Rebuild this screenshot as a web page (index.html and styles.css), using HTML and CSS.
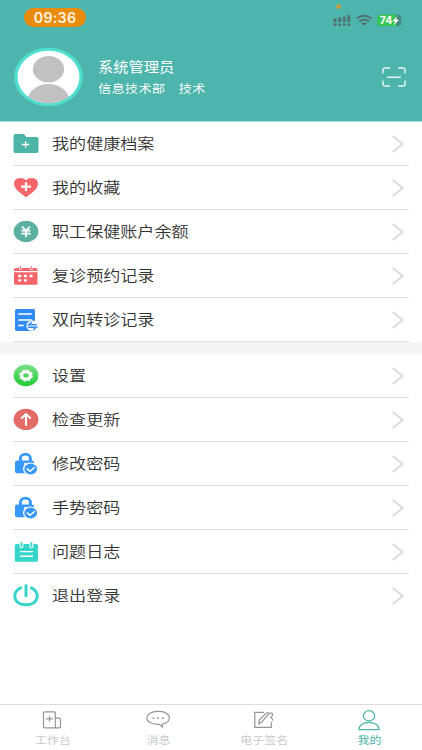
FILE: index.html
```html
<!DOCTYPE html>
<html lang="zh-CN">
<head>
<meta charset="utf-8">
<title>我的</title>
<link rel="stylesheet" href="styles.css">
</head>
<body>
<svg class="defs" width="0" height="0" aria-hidden="true">
  <defs>
    <linearGradient id="green" x1="0" y1="0" x2="0" y2="1"><stop offset="0" stop-color="#7be08a"/><stop offset="1" stop-color="#21cb35"/></linearGradient>
    <symbol id="chevron" viewBox="0 0 12 18"><path d="M.8 1 10.6 9 .8 17" fill="none" stroke="#dadada" stroke-width="1.9"/></symbol>
    <symbol id="lock" viewBox="0 0 26 25">
      <path d="M7.400 11V7.400a5 4.300 0 0 1 10 0V11" fill="none" stroke="#3797fb" stroke-width="2.900"/>
      <rect x="2" y="9.500" width="19" height="12.800" rx="2" fill="#3797fb"/>
      <circle cx="12.400" cy="13" r="1.300" fill="#fff"/>
      <ellipse cx="17.300" cy="17.800" rx="7.400" ry="6.300" fill="#fff"/>
      <ellipse cx="17.700" cy="18" rx="6.400" ry="5.400" fill="#3797fb"/>
      <path d="m13.800 17.700 3.200 2.500 4.700-4" fill="none" stroke="#fff" stroke-width="1.500"/>
    </symbol>
  </defs>
</svg>
<div class="app">
  <header class="header">
    <div class="status">
      <span class="clock">09:36</span>
      <svg class="signals" width="80" height="30" viewBox="0 0 80 30">
        <circle cx="9.6" cy="6.6" r="2.4" fill="#c79a43"/>
        <g fill="#52706d"><rect x="4.6" y="18.6" width="2.9" height="3.5" rx=".7"/><rect x="9.2" y="17.6" width="2.9" height="4.5" rx=".7"/><rect x="13.8" y="16.4" width="2.9" height="5.7" rx=".7"/><rect x="18.4" y="15" width="2.9" height="7.1" rx=".7"/><rect x="4.6" y="23.2" width="2.9" height="2.7" rx=".7"/><rect x="9.2" y="23.2" width="2.9" height="2.7" rx=".7"/><rect x="13.8" y="23.2" width="2.9" height="2.7" rx=".7"/><rect x="18.4" y="23.2" width="2.9" height="2.7" rx=".7"/></g>
        <g fill="none" stroke="#52706d" stroke-width="2.100"><path d="M28 18.300q7.300-5 14.600 0M30.500 21.300q4.800-3.200 9.600 0"/></g>
        <path d="M32.400 23.400q2.900-1.800 5.800 0l-2.900 2.200z" fill="#52706d"/>
        <rect x="48.300" y="14.800" width="24" height="11.200" rx="3.300" fill="#438a80"/>
        <path d="M51.600 14.800H67V26H51.600a3.300 3.300 0 0 1-3.300-3.300v-4.600a3.300 3.300 0 0 1 3.300-3.300z" fill="#35c755"/>
        <path d="M73.400 18.700q1.300 1.700 0 3.400z" fill="#438a80"/>
        <text x="50.800" y="24.300" class="charge" textLength="12.600" lengthAdjust="spacingAndGlyphs">74</text>
        <path d="m68.300 16.400-5 4.900h2.700l-1.100 3.900 5.100-5.400h-2.700z" fill="#fff"/>
      </svg>
    </div>
    <div class="profile">
      <svg class="avatar" width="70" height="60" viewBox="0 0 70 60">
        <defs><clipPath id="face"><ellipse cx="34.500" cy="30" rx="31" ry="26.300"/></clipPath></defs>
        <ellipse cx="34.500" cy="30" rx="34.400" ry="29.300" fill="#4fded0"/>
        <ellipse cx="34.500" cy="30" rx="31" ry="26.300" fill="#fff"/>
        <g clip-path="url(#face)" fill="#c1c1c1"><ellipse cx="34.500" cy="22.200" rx="15.600" ry="13.200"/><ellipse cx="34.500" cy="55" rx="21.300" ry="18"/></g>
      </svg>
      <div class="who"><div class="name">系统管理员</div><div class="dept">信息技术部　技术</div></div>
      <svg class="scan" width="24" height="20" viewBox="0 0 24 20"><path d="M1 6.500V3q0-2 2-2h5M16 1h5q2 0 2 2v3.500M23 13.500V17q0 2-2 2h-5M8 19H3q-2 0-2-2v-3.500M5.200 10.200h13.500" fill="none" stroke="#e4f8f3" stroke-width="1.400"/></svg>
    </div>
  </header>
  <main>
    <ul class="menu">
      <li><svg class="icon" viewBox="0 0 26 25"><path d="M2.500 3H11l2.200 3h10.300q2 0 2 1.800v12.400q0 1.800-2 1.800h-21q-2 0-2-1.800V4.800Q.5 3 2.500 3z" fill="#4cb5a8"/><path d="M8.800 13.500h7.600M12.600 10.200v6.600" stroke="#fff" stroke-width="1.300"/></svg><span class="label">我的健康档案</span><svg class="arrow"><use href="#chevron"/></svg></li>
      <li><svg class="icon" viewBox="0 0 26 25"><path d="M13 22.200Q1 14.500 1 9q0-6 6.200-6 3.800 0 5.800 2.200 2-2.200 5.800-2.200Q25 3 25 9q0 5.500-12 13.200z" fill="#f4666a"/><path d="M8 11.600h10M13 7.300v8.600" stroke="#fff" stroke-width="2.300"/></svg><span class="label">我的收藏</span><svg class="arrow"><use href="#chevron"/></svg></li>
      <li><svg class="icon" viewBox="0 0 26 25"><ellipse cx="13" cy="12.500" rx="12.400" ry="10.700" fill="#5cb0a2"/><path d="m9 7.500 4 4.200 4-4.200M8.500 11.700h9M8.500 14.700h9M13 11.500v6.800" fill="none" stroke="#fff" stroke-width="1.700"/></svg><span class="label">职工保健账户余额</span><svg class="arrow"><use href="#chevron"/></svg></li>
      <li><svg class="icon" viewBox="0 0 26 25"><path d="M1 9.300h23.500v11q0 1.500-1.700 1.500H2.700Q1 21.800 1 20.300zM1 8V6.500Q1 5 2.700 5h20.100q1.700 0 1.700 1.500V8z" fill="#f4666a"/><path d="M7.300 3.300v3.500M18.200 3.300v3.500" stroke="#fff" stroke-width="2.600"/><path d="M7.300 3.300v3.200M18.200 3.300v3.200" stroke="#f4666a" stroke-width="1.200"/><path d="M5.200 13h3M10.900 13h3M16.600 13h3M5.200 17.300h3M10.900 17.300h3" stroke="#fff" stroke-width="2.300"/></svg><span class="label">复诊预约记录</span><svg class="arrow"><use href="#chevron"/></svg></li>
      <li><svg class="icon" viewBox="0 0 26 25"><rect x="2" y="2" width="20" height="22" rx="1.800" fill="#2f8cf7"/><path d="M5.200 7h13.500M5.200 12.900h13.500M5.200 18.600h5.500" stroke="#fff" stroke-width="1.500"/><ellipse cx="19.500" cy="18.800" rx="6.200" ry="5.200" fill="#fff"/><path d="M23.800 17.700h-8.300l3.500-2.700M15 20.300h8.500L20 23" fill="none" stroke="#2f8cf7" stroke-width="1.400"/></svg><span class="label">双向转诊记录</span><svg class="arrow"><use href="#chevron"/></svg></li>
    </ul>
    <ul class="menu second">
      <li><svg class="icon" viewBox="0 0 26 25"><ellipse cx="13" cy="12.400" rx="12.400" ry="10.800" fill="url(#green)"/><g fill="none" stroke="#fff"><ellipse cx="13" cy="12.400" rx="4.300" ry="3.700" stroke-width="3"/><ellipse cx="13" cy="12.400" rx="6" ry="5.200" stroke-width="1.700" stroke-dasharray="2.500 1.890"/></g></svg><span class="label">设置</span><svg class="arrow"><use href="#chevron"/></svg></li>
      <li><svg class="icon" viewBox="0 0 26 25"><ellipse cx="13" cy="12.400" rx="12.400" ry="10.700" fill="#e26a67"/><path d="M13 18.700V7.600M8.200 11.600 13 7.200l4.800 4.400" fill="none" stroke="#fff" stroke-width="2.100"/></svg><span class="label">检查更新</span><svg class="arrow"><use href="#chevron"/></svg></li>
      <li><svg class="icon"><use href="#lock"/></svg><span class="label">修改密码</span><svg class="arrow"><use href="#chevron"/></svg></li>
      <li><svg class="icon"><use href="#lock"/></svg><span class="label">手势密码</span><svg class="arrow"><use href="#chevron"/></svg></li>
      <li><svg class="icon" viewBox="0 0 26 25"><rect x="1.800" y="5" width="23.200" height="17.800" rx="1.500" fill="#35d5c9"/><path d="M8.400 3.300v4M18.400 3.300v4" stroke="#fff" stroke-width="4" stroke-linecap="round"/><path d="M8.400 3.900v3.400M18.400 3.900v3.400" stroke="#35d5c9" stroke-width="1.900" stroke-linecap="round"/><path d="M7 12.600h13M7 17.300h13" stroke="#fff" stroke-width="1.400"/></svg><span class="label">问题日志</span><svg class="arrow"><use href="#chevron"/></svg></li>
      <li><svg class="icon" viewBox="0 0 26 25"><path d="M7.500 4.800C-1.700 9.500 .5 21.800 13 21.800S27.700 9.500 18.500 4.800M13 2.600v10.200" fill="none" stroke="#35d5c9" stroke-width="3" stroke-linecap="round"/></svg><span class="label">退出登录</span><svg class="arrow"><use href="#chevron"/></svg></li>
    </ul>
  </main>
  <nav class="tabs">
    <a><svg width="26" height="22" viewBox="0 0 26 22"><path d="M3.500 2.800q0-1 1-1h9.800q1 0 1 1v15H4.500q-1 0-1-1zM15.300 8.200h4.200q1 0 1 1v7.600q0 1-1 1h-4.200M6 8.900h7M9.500 6v5.800" fill="none" stroke="#969696" stroke-width="1.200"/></svg><span>工作台</span></a>
    <a><svg width="26" height="22" viewBox="0 0 26 22"><path d="M13 1.400c-15 0-15 13 0 13h1.500l2.800 2.700v-3C28.500 11.500 26 1.400 13 1.400z" fill="none" stroke="#969696" stroke-width="1.200"/><path d="M7.500 8.300h1.800M12.200 8.300H14M17 8.300h1.800" stroke="#969696" stroke-width="1.600"/></svg><span>消息</span></a>
    <a><svg width="26" height="22" viewBox="0 0 26 22"><path d="M13 2.300H3.800v15h16.500v-5.500M7.800 13.800l.3-3.500L15 3.400q1.700-1.500 3 .3l-7.500 8.500zM18 3.600q3-1.300 3.700.6.300 1.400-1.900 3.200 2 1 1.900 3.300" fill="none" stroke="#969696" stroke-width="1.200"/></svg><span>电子签名</span></a>
    <a class="active"><svg width="26" height="22" viewBox="0 0 26 22"><path d="M2.900 19.700c0-9.800 20.200-9.800 20.200 0z" fill="none" stroke="#4cb5a8" stroke-width="1.200"/><ellipse cx="13" cy="5.800" rx="5.700" ry="5.100" fill="#fff" stroke="#4cb5a8" stroke-width="1.200"/></svg><span>我的</span></a>
  </nav>
</div>
</body>
</html>
```
FILE: styles.css
```css
* { box-sizing: border-box; }
body {
  margin: 0;
  background: #fff;
  font-family: "Noto Sans CJK SC", sans-serif;
}
.defs { position: absolute; }
svg { display: block; flex: none; }
.app { width: 422px; height: 750px; display: flex; flex-direction: column; overflow: hidden; }
.header { height: 122px; background: #4eb5ac; border-bottom: 1px solid #a5ddd6; flex: none; }
.status { height: 47px; display: flex; justify-content: space-between; align-items: flex-start; padding-right: 13px; }
.clock {
  margin: 8px 0 0 24px;
  width: 62px;
  height: 19px;
  border-radius: 10px;
  background: #e98b0d;
  color: #fff5df;
  font: 600 14.2px/19px Inter, sans-serif;
  text-align: center;
  letter-spacing: .3px;
}
.charge { font: 700 10.5px Inter, sans-serif; fill: #fff; }
.profile { display: flex; align-items: flex-start; padding-left: 14px; }
.who { flex: 1; padding: 8px 0 0 14px; color: #fff; white-space: nowrap; }
.name, .dept { transform-origin: left; transform: scaleX(1.13); width: max-content; }
.name { font-size: 13.5px; line-height: 22px; }
.dept { font-size: 11.9px; line-height: 21px; font-weight: 350; }
.scan { margin: 20px 16px 0 0; }
.menu { list-style: none; margin: 0; padding: 0 13px; }
.menu li { height: 44px; display: flex; align-items: center; border-bottom: 1px solid #dedede; }
.icon { width: 26px; height: 25px; }
.label {
  margin-left: 13px;
  font-size: 15px;
  font-weight: 350;
  line-height: 24px;
  padding-bottom: 2px;
  color: #333;
  white-space: nowrap;
  transform-origin: left;
  transform: scaleX(1.138);
}
.arrow { width: 12px; height: 18px; margin: 0 5px 0 auto; }
.second { border-top: 12px solid #f4f4f4; }
.second li:last-child { border-bottom-color: transparent; }
.tabs { margin-top: auto; height: 46px; border-top: 1px solid #dcdcdc; display: grid; grid-template-columns: repeat(4, 1fr); flex: none; }
.tabs a { display: flex; flex-direction: column; align-items: center; padding-top: 5px; color: #cacaca; }
.tabs span { margin-top: -1px; font-size: 10.6px; line-height: 17px; transform: scaleX(1.13); white-space: nowrap; }
.tabs .active { color: #4cb5a8; }
```
